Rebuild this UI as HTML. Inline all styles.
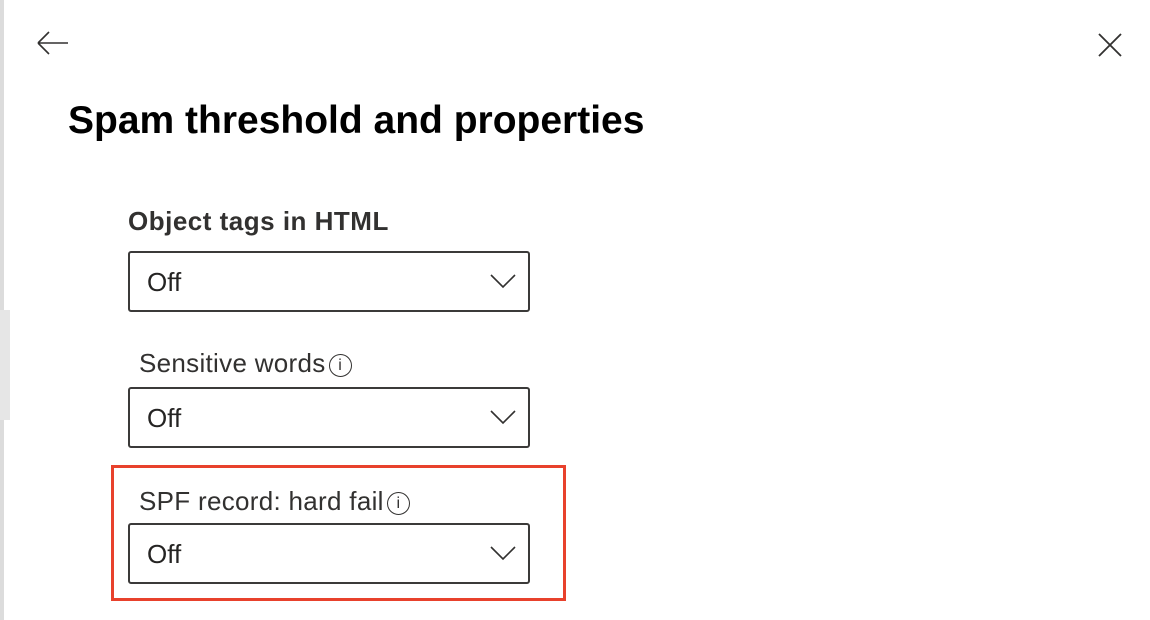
<!DOCTYPE html>
<html><head><style>
body{margin:0;width:1150px;height:620px;background:#fff;position:relative;overflow:hidden;font-family:"Liberation Sans",sans-serif;color:#222}
.a{position:absolute}
.lbl{font-size:26px;color:#323130;letter-spacing:0.3px}
.box{position:absolute;left:128px;width:398px;height:57px;border:2px solid #3b3a39;border-radius:3px;box-sizing:content-box}
.box span{position:absolute;left:17px;top:14px;font-size:26px;color:#252423}
.box svg{position:absolute;right:12px;top:20px}
.info{display:inline-block;width:21px;height:21px;border:1.5px solid #323130;border-radius:50%;font-size:16px;text-align:center;line-height:21px;vertical-align:2px;margin-left:3px;letter-spacing:0}
</style></head><body>
<div class="a" style="left:0;top:0;width:4px;height:620px;background:#dcdcdc"></div>
<div class="a" style="left:0;top:310px;width:10px;height:110px;background:#e6e6e6"></div>
<svg class="a" style="left:36px;top:30px" width="34" height="26" viewBox="0 0 34 26"><path d="M2 13H32M2 13L13 2M2 13L13 24" stroke="#323130" stroke-width="1.6" fill="none"/></svg>
<svg class="a" style="left:1097px;top:32px" width="26" height="26" viewBox="0 0 26 26"><path d="M2 2L24 24M24 2L2 24" stroke="#323130" stroke-width="1.8"/></svg>
<div class="a" style="left:68px;top:99px;font-size:39px;font-weight:bold;color:#000">Spam threshold and properties</div>
<div class="a lbl" style="left:128px;top:206px;font-weight:bold;font-size:26px;letter-spacing:0.5px">Object tags in HTML</div>
<div class="box" style="top:251px"><span>Off</span><svg width="26" height="16"><path d="M1 2L13 14L25 2" stroke="#323130" stroke-width="1.6" fill="none"/></svg></div>
<div class="a lbl" style="left:139px;top:348px">Sensitive words<span class="info">i</span></div>
<div class="box" style="top:387px"><span>Off</span><svg width="26" height="16"><path d="M1 2L13 14L25 2" stroke="#323130" stroke-width="1.6" fill="none"/></svg></div>
<div class="a" style="left:111px;top:465px;width:449px;height:130px;border:3px solid #e8412c"></div>
<div class="a lbl" style="left:139px;top:486px">SPF record: hard fail<span class="info">i</span></div>
<div class="box" style="top:523px"><span>Off</span><svg width="26" height="16"><path d="M1 2L13 14L25 2" stroke="#323130" stroke-width="1.6" fill="none"/></svg></div>
</body></html>
